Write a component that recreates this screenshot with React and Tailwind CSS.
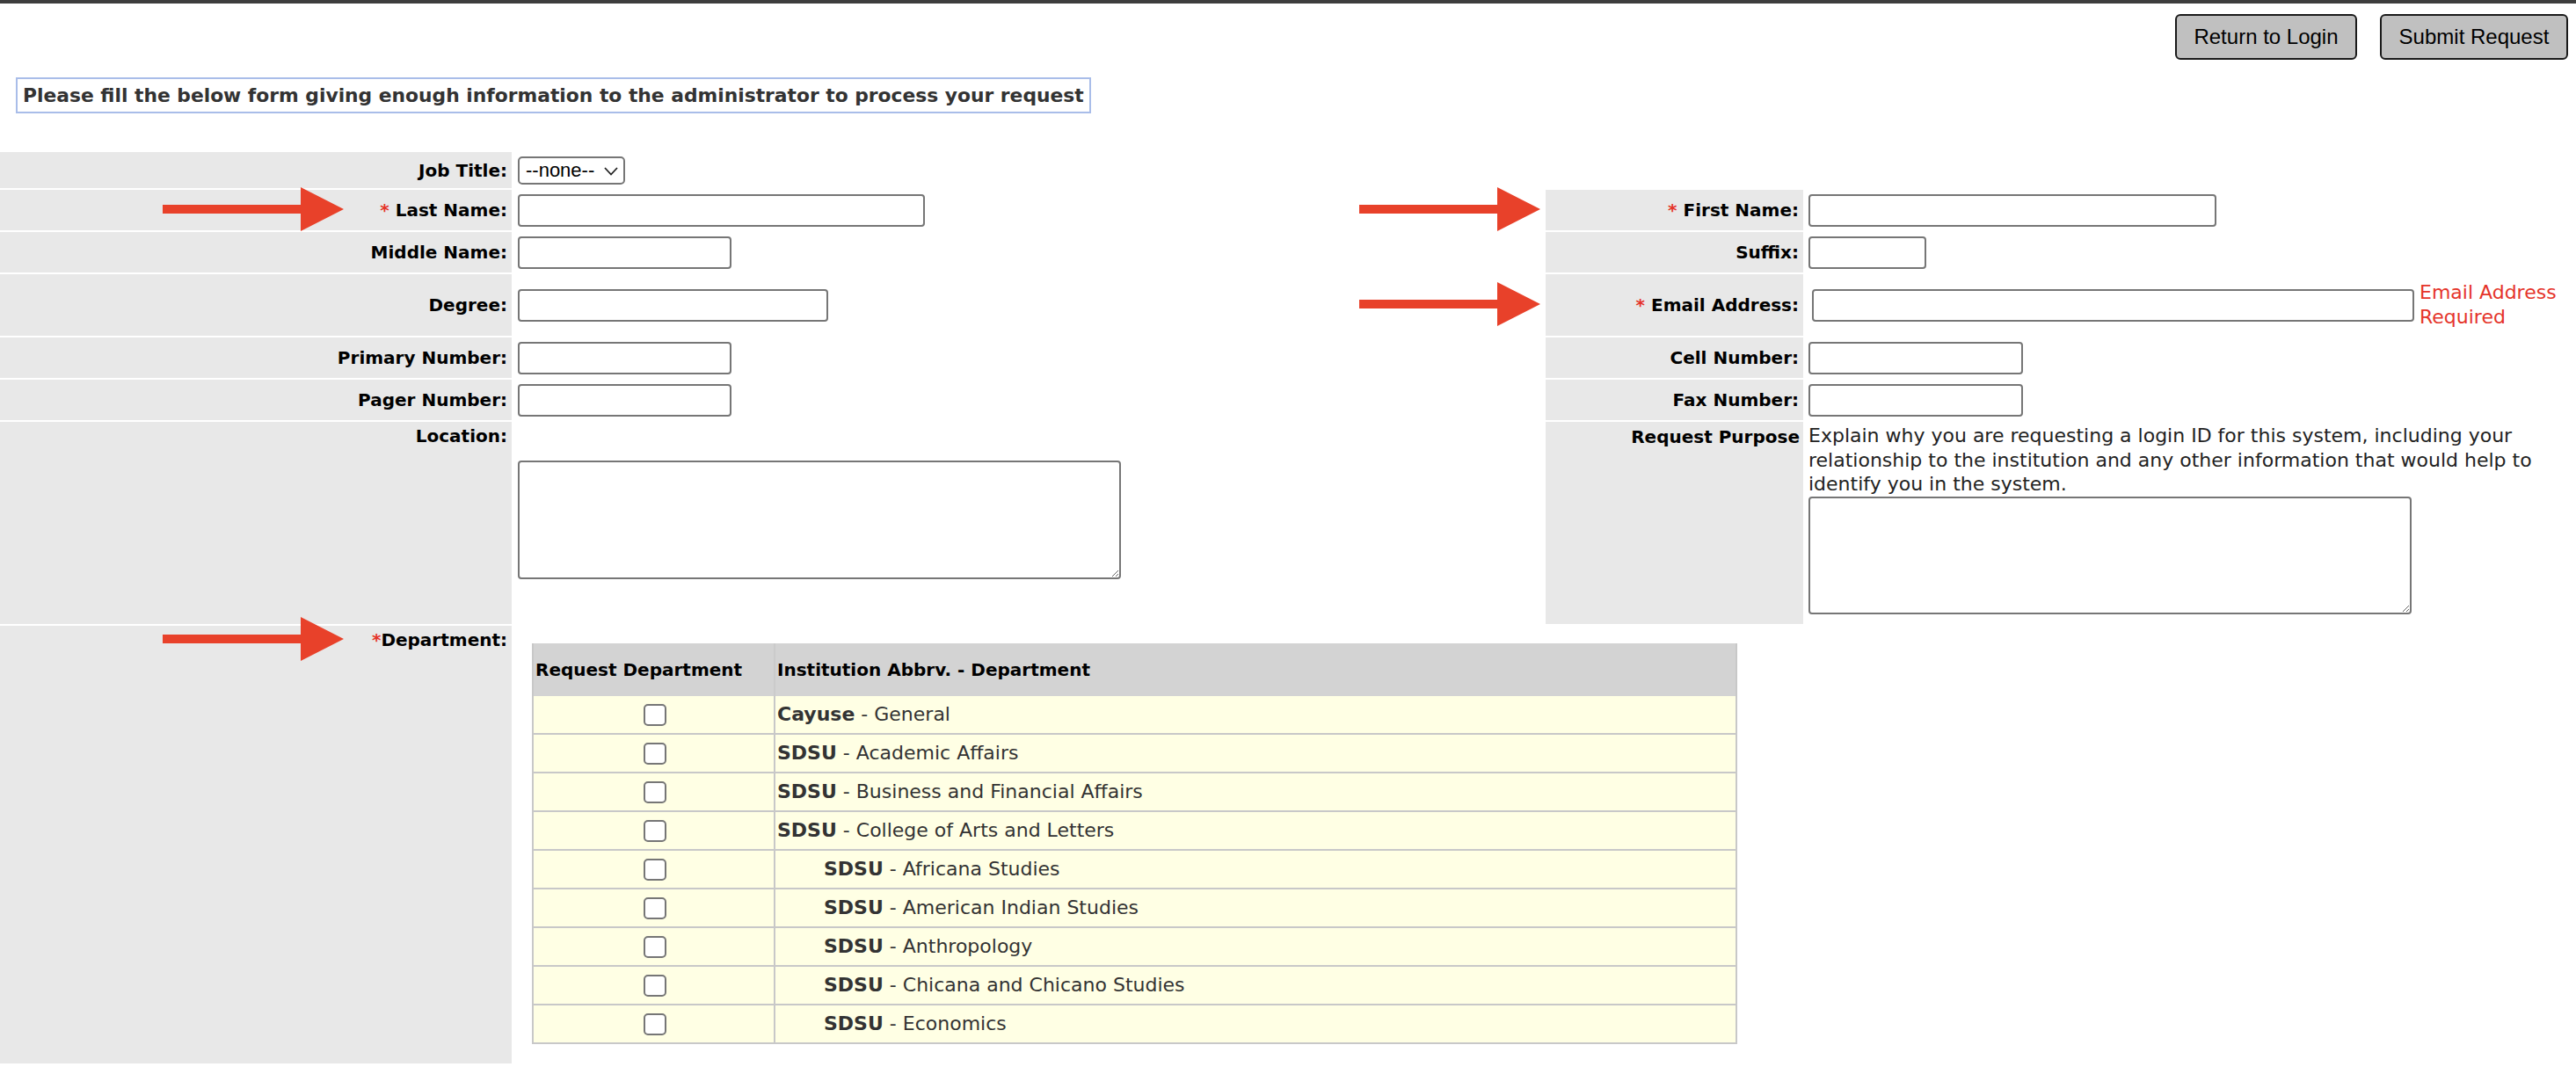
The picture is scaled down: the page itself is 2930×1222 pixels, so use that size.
import { useState } from "react";

const departments = [
  { abbr: "Cayuse", name: "General", sub: false },
  { abbr: "SDSU", name: "Academic Affairs", sub: false },
  { abbr: "SDSU", name: "Business and Financial Affairs", sub: false },
  { abbr: "SDSU", name: "College of Arts and Letters", sub: false },
  { abbr: "SDSU", name: "Africana Studies", sub: true },
  { abbr: "SDSU", name: "American Indian Studies", sub: true },
  { abbr: "SDSU", name: "Anthropology", sub: true },
  { abbr: "SDSU", name: "Chicana and Chicano Studies", sub: true },
  { abbr: "SDSU", name: "Economics", sub: true },
];

function Arrow({ className }) {
  return (
    <svg
      className={className}
      width="206"
      height="50"
      viewBox="0 0 206 50"
    >
      <polygon
        points="0,20 157,20 157,0 206,25 157,50 157,30 0,30"
        fill="#e8412a"
      />
    </svg>
  );
}

function Label({ children, top = false }) {
  return (
    <div
      className={`bg-[#e8e8e8] flex justify-end pr-[5px] font-bold text-black ${
        top ? "items-start pt-[2px]" : "items-center"
      }`}
    >
      {children}
    </div>
  );
}

function Req() {
  return <span className="text-[#e5342a]">*</span>;
}

function TextInput({ w, className = "" }) {
  return (
    <input
      type="text"
      className={`h-[37px] bg-white border-2 border-[#767676] rounded-[4px] outline-none ${w} ${className}`}
    />
  );
}

export default function App() {
  const [jobTitle, setJobTitle] = useState("none");

  return (
    <div className="relative min-h-screen bg-white font-['DejaVu_Sans',Verdana,sans-serif] text-[20px] leading-[28px]">
      <div className="h-[4px] bg-[#3d3d3d]" />

      {/* top buttons */}
      <div className="flex justify-end gap-[26px] pr-[9px] pt-[12px] font-['Liberation_Sans',Arial,sans-serif]">
        <button className="w-[207px] h-[52px] bg-[#c0c0c0] border-2 border-[#1a1a1a] rounded-[6px] text-[24px] text-black">
          Return to Login
        </button>
        <button className="w-[214px] h-[52px] bg-[#c0c0c0] border-2 border-[#1a1a1a] rounded-[6px] text-[24px] text-black">
          Submit Request
        </button>
      </div>

      <div className="ml-[18px] mt-[20px] w-[1223px] h-[41px] border-2 border-[#a9bde9] flex items-center pl-[6px] font-bold text-[21.8px] whitespace-nowrap text-[#333]">
        Please fill the below form giving enough information to the administrator to process your request
      </div>

      {/* form grid */}
      <div className="mt-[44px] grid grid-cols-[582px_1176px_293px_1fr] grid-rows-[41px_46px_46px_70px_46px_46px_230px_498px] gap-y-[2px]">
        {/* row 1 */}
        <Label>Job Title:</Label>
        <div className="flex items-center pl-[7px]">
          <div className="relative">
            <select
              value={jobTitle}
              onChange={(e) => setJobTitle(e.target.value)}
              className="appearance-none w-[122px] h-[32px] bg-white border-2 border-[#767676] rounded-[5px] pl-[7px] text-[22px] leading-[26px] text-black font-['Liberation_Sans',Arial,sans-serif] outline-none"
            >
              <option value="none">--none--</option>
            </select>
            <svg
              className="absolute left-[98px] top-[12px] pointer-events-none"
              width="16"
              height="10"
              viewBox="0 0 16 10"
            >
              <path d="M1 1 L8 8.5 L15 1" fill="none" stroke="#222" strokeWidth="1.8" />
            </svg>
          </div>
        </div>
        <div />
        <div />

        {/* row 2 */}
        <Label>
          <Req />&nbsp;Last Name:
        </Label>
        <div className="flex items-center pl-[7px]">
          <TextInput w="w-[463px]" />
        </div>
        <Label>
          <Req />&nbsp;First Name:
        </Label>
        <div className="flex items-center pl-[6px]">
          <TextInput w="w-[464px]" />
        </div>

        {/* row 3 */}
        <Label>Middle Name:</Label>
        <div className="flex items-center pl-[7px]">
          <TextInput w="w-[243px]" />
        </div>
        <Label>Suffix:</Label>
        <div className="flex items-center pl-[6px]">
          <TextInput w="w-[134px]" />
        </div>

        {/* row 4 */}
        <Label>Degree:</Label>
        <div className="flex items-center pl-[7px]">
          <TextInput w="w-[353px]" />
        </div>
        <Label>
          <Req />&nbsp;Email Address:
        </Label>
        <div className="flex items-center pl-[6px]">
          <TextInput w="w-[685px]" className="ml-[4px]" />
          <span className="ml-[6px] w-[172px] text-[22px] leading-[28px] text-[#e5342a]">
            Email Address Required
          </span>
        </div>

        {/* row 5 */}
        <Label>Primary Number:</Label>
        <div className="flex items-center pl-[7px]">
          <TextInput w="w-[243px]" />
        </div>
        <Label>Cell Number:</Label>
        <div className="flex items-center pl-[6px]">
          <TextInput w="w-[244px]" />
        </div>

        {/* row 6 */}
        <Label>Pager Number:</Label>
        <div className="flex items-center pl-[7px]">
          <TextInput w="w-[243px]" />
        </div>
        <Label>Fax Number:</Label>
        <div className="flex items-center pl-[6px]">
          <TextInput w="w-[244px]" />
        </div>

        {/* row 7 */}
        <Label top>Location:</Label>
        <div className="flex items-start pl-[7px] pt-[44px]">
          <textarea className="w-[686px] h-[135px] bg-white border-2 border-[#767676] rounded-[4px] outline-none" />
        </div>
        <div className="bg-[#e8e8e8] flex justify-end items-start pr-[4px] pt-[3px] font-bold text-black">
          Request Purpose
        </div>
        <div className="pl-[6px] pr-[10px] pt-[2px] text-[22px] text-[#222] leading-[27.5px]">
          <p>
            Explain why you are requesting a login ID for this system, including your relationship to the institution and any other information that would help to identify you in the system.
          </p>
          <textarea className="block w-[686px] h-[134px] bg-white border-2 border-[#767676] rounded-[4px] outline-none" />
        </div>

        {/* row 8 */}
        <Label top>
          <Req />Department:
        </Label>
        <div className="col-span-3 pl-[23px] pt-[20px]">
          <div className="w-[1371px] h-[456px] overflow-hidden border-x-2 border-[#c8c8c8]">
            <div className="flex h-[60px] bg-[#d3d3d3] font-bold text-black">
              <div className="w-[275px] flex items-center pl-[2px] border-r-2 border-[#cbcbcb]">
                Request Department
              </div>
              <div className="flex items-center pl-[2px]">
                Institution Abbrv. - Department
              </div>
            </div>
            {departments.map((d, i) => (
              <div
                key={i}
                className="flex h-[44px] bg-[#ffffe4] border-b-2 border-[#c8c8c8] text-[#333] text-[22px]"
              >
                <div className="w-[275px] flex items-center justify-center border-r-2 border-[#c8c8c8]">
                  <input
                    type="checkbox"
                    className="appearance-none w-[26px] h-[25px] bg-white border-2 border-[#767676] rounded-[5px] ml-[2px]"
                  />
                </div>
                <div className={`flex items-center ${d.sub ? "pl-[55px]" : "pl-[2px]"}`}>
                  <span>
                    <b>{d.abbr}</b>&nbsp;-&nbsp;{d.name}
                  </span>
                </div>
              </div>
            ))}
          </div>
        </div>
      </div>

      {/* annotation arrows */}
      <Arrow className="absolute left-[185px] top-[213px]" />
      <Arrow className="absolute left-[1546px] top-[213px]" />
      <Arrow className="absolute left-[1546px] top-[321px]" />
      <Arrow className="absolute left-[185px] top-[702px]" />
    </div>
  );
}
